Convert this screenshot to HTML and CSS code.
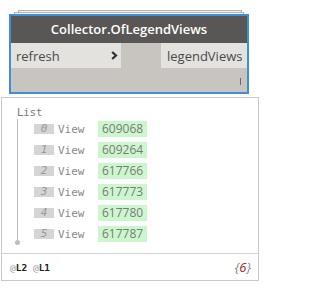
FILE: index.html
```html
<!DOCTYPE html>
<html lang="en">
<head>
  <meta charset="UTF-8">
  <title>Collector.OfLegendViews</title>
  <link rel="stylesheet" href="styles.css">
</head>
<body>
  <div class="nodeWrap">
    <div class="back back1"></div>
    <div class="back back2"></div>
    <div class="node">
      <div class="title">Collector.OfLegendViews</div>
      <div class="ports">
        <div class="inPort">
          <span>refresh</span>
          <svg class="chevron" width="7" height="9" viewBox="0 0 7 9">
            <path d="M1.2 1 L5 4.5 L1.2 8" fill="none" stroke="#2e2e2e" stroke-width="2.2"/>
          </svg>
        </div>
        <div class="outPort">legendViews</div>
      </div>
      <div class="nodeBottom">
        <div class="grip"></div>
      </div>
    </div>
  </div>

  <div class="watch">
    <div class="watchBody">
      <div class="listLabel">List</div>
      <div class="tree">
        <div class="row"><span class="idx">0</span><span class="kind">View</span><span class="val">609068</span></div>
        <div class="row"><span class="idx">1</span><span class="kind">View</span><span class="val">609264</span></div>
        <div class="row"><span class="idx">2</span><span class="kind">View</span><span class="val">617766</span></div>
        <div class="row"><span class="idx">3</span><span class="kind">View</span><span class="val">617773</span></div>
        <div class="row"><span class="idx">4</span><span class="kind">View</span><span class="val">617780</span></div>
        <div class="row"><span class="idx">5</span><span class="kind">View</span><span class="val">617787</span></div>
      </div>
      <div class="treeEnd"></div>
    </div>
    <div class="watchFooter">
      <div class="levels"><span class="at">@</span>L2 <span class="at">@</span>L1</div>
      <div class="count"><span class="brace">{</span>6<span class="brace">}</span></div>
    </div>
  </div>
</body>
</html>
```

FILE: styles.css
```css
body {
  margin: 0;
  background-color: #ffffff;
  font-family: "Open Sans", "DejaVu Sans", sans-serif;
}

/* 节点 */
.nodeWrap {
  width: 240px;
  margin: 10px 0 0 9px;
}
.back {
  height: 1px;
  border: 1px solid #b4b4b4;
  border-bottom: none;
  background: #f2f2f2;
}
.back1 {
  margin: 0 7px 0 9px;
}
.back2 {
  margin: 0 5px 0 5px;
}
.node {
  border: 2px solid #3d8fd9;
  background: #c8c4bf;
}
.title {
  height: 27px;
  line-height: 27px;
  background: #595755;
  color: #ffffff;
  font-size: 13px;
  font-weight: 600;
  text-align: center;
}
.ports {
  display: flex;
  justify-content: space-between;
  height: 25px;
}
.inPort, .outPort {
  display: flex;
  align-items: center;
  background: #e4e2df;
  color: #4a4a4a;
  font-size: 13px;
}
.inPort {
  width: 110px;
  box-sizing: border-box;
  justify-content: space-between;
  padding: 0 3px 0 5px;
}
.outPort {
  width: 86px;
  box-sizing: border-box;
  padding-left: 6px;
}
.nodeBottom {
  height: 24px;
  display: flex;
  justify-content: flex-end;
  align-items: center;
  padding-right: 6px;
}
.grip {
  width: 1px;
  height: 7px;
  background: #6a6a6a;
  margin-top: 3px;
}

/* 预览 */
.watch {
  width: 258px;
  box-sizing: border-box;
  margin: 3px 0 0 1px;
  border: 1px solid #c9c9c9;
}
.watchBody {
  padding: 7px 0 8px 15px;
  font-family: "DejaVu Sans Mono", monospace;
}
.listLabel {
  font-size: 10.5px;
  line-height: 14px;
  color: #7a7a7a;
  height: 14px;
}
.tree {
  border-left: 1px solid #bdbdbd;
  padding: 2px 0 0 16px;
  display: flex;
  flex-direction: column;
  gap: 5px;
}
.row {
  display: flex;
  align-items: center;
  height: 16px;
}
.idx {
  width: 20px;
  height: 10px;
  line-height: 10px;
  background: #d5d5d5;
  color: #999999;
  font-size: 11px;
  font-style: italic;
  text-align: center;
  margin-top: -1px;
}
.kind {
  margin-left: 4px;
  width: 40px;
  color: #8a8a8a;
  font-size: 11px;
}
.val {
  width: 49px;
  height: 16px;
  line-height: 16px;
  box-sizing: border-box;
  padding-left: 4px;
  background: #ccf7cc;
  color: #7a7a7a;
  font-family: "Open Sans", sans-serif;
  font-size: 12px;
}
.treeEnd {
  width: 5px;
  height: 5px;
  border-radius: 50%;
  background: #bdbdbd;
  margin: -2px 0 0 -2px;
}
.watchFooter {
  display: flex;
  justify-content: space-between;
  align-items: center;
  height: 26px;
  border-top: 1px solid #d4d4d4;
  padding: 0 7px 0 8px;
}
.levels {
  font-family: "DejaVu Sans Mono", monospace;
  font-size: 9.5px;
  font-weight: bold;
  color: #222222;
}
.at {
  color: #9a9a9a;
  font-weight: normal;
}
.count {
  font-family: "Open Sans", sans-serif;
  font-style: italic;
  font-size: 13px;
  color: #9b1b1b;
}
.brace {
  color: #8a8a8a;
}
```
